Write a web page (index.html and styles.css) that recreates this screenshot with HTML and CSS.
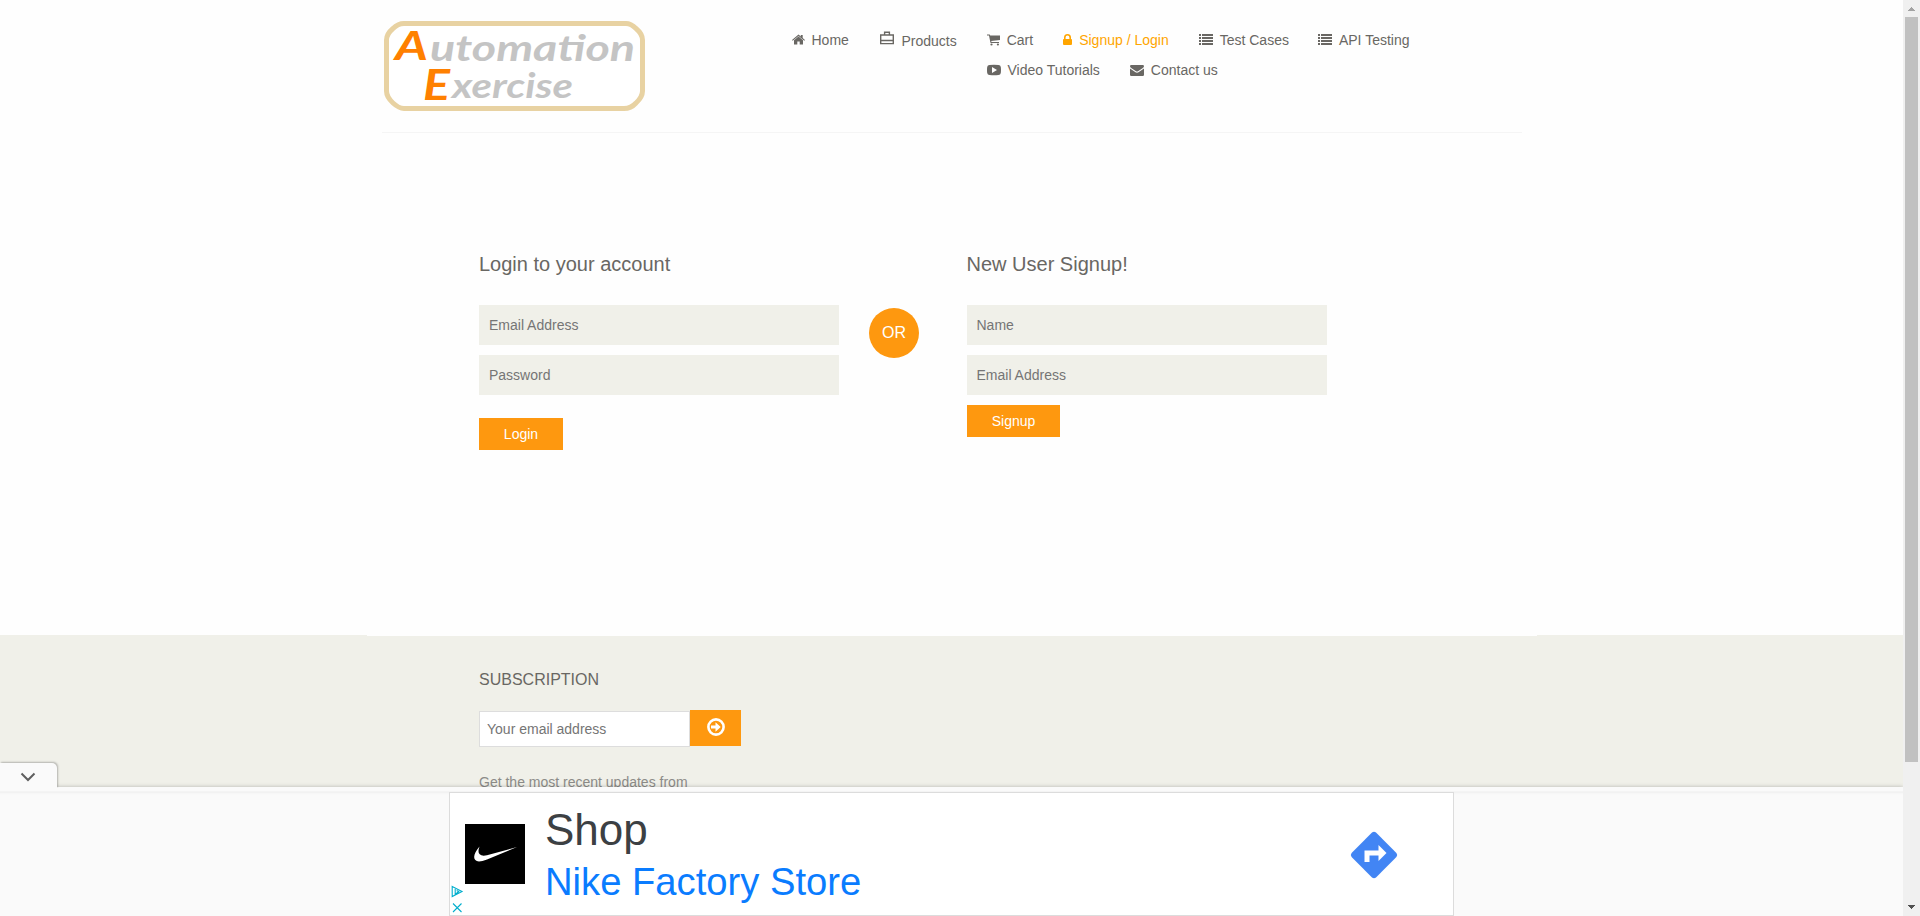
FILE: index.html
```html
<!DOCTYPE html>
<html lang="en">
<head>
<meta charset="utf-8">
<title>Automation Exercise - Signup / Login</title>
<link rel="stylesheet" href="styles.css">
</head>
<body>
<div class="window">
<div class="page">
  <header class="header container">
    <div class="header-inner">
      <a class="logo">
        <svg width="262" height="92" viewBox="0 0 262 92">
          <path class="logo-frame" d="M20 3.500H242Q247 3.500 252 8.500Q258.500 14 258.500 20V71Q258.500 77 252 83Q247 88.500 240 88.500H20Q15 88.500 9 83Q2.500 77 2.500 71V20Q2.500 14 9 8.500Q14 3.500 20 3.500Z"/>
          <g class="logo-text">
            <text class="cap" x="11" y="40" font-size="41" textLength="33" lengthAdjust="spacingAndGlyphs">A</text>
            <text x="46" y="41" font-size="36" textLength="205" lengthAdjust="spacingAndGlyphs">utomation</text>
            <text class="cap" x="39" y="80" font-size="42" textLength="27" lengthAdjust="spacingAndGlyphs">E</text>
            <text x="68" y="78" font-size="35" textLength="121" lengthAdjust="spacingAndGlyphs">xercise</text>
          </g>
        </svg>
      </a>
      <nav class="nav">
        <ul class="nav-row">
          <li><svg width="13" height="14" viewBox="0 0 13 14"><path d="M6.500 3.500 11 7.300V11.500H7.700V8.500H5.300V11.500H2V7.300ZM0 7 6.500 1.500 8.800 3.500V2H10.700V5.100L13 7 12.300 7.800 6.500 3 .7 7.800Z"/></svg>Home</li>
          <li class="products"><svg class="bag" width="15.600" height="16" viewBox="0 0 15.600 16"><path class="line" d="M1.700 5H14.300V13.600H1.700ZM1.700 10.500H14.300M5.600 5V2.200H10.400V5"/></svg><span>Products</span></li>
          <li><svg width="13" height="14" viewBox="0 0 13 14"><path d="M0 1.500H2.700L3.200 2.500H13V7L4.200 8.100 4.500 9H12V10H3.500L2 2.500H0Z"/><circle cx="4.500" cy="11.500" r="1.100"/><circle cx="10.900" cy="11.500" r="1.100"/></svg>Cart</li>
          <li class="active"><svg width="9" height="14" viewBox="0 0 9 14"><path fill-rule="evenodd" d="M1 6V4.500a3.500 3.500 0 0 1 7 0V6q1 0 1 .8V11q0 1-1 1H1q-1 0-1-1V6.800Q0 6 1 6ZM2.600 6H6.400V4.500a1.900 1.900 0 0 0-3.800 0Z"/></svg>Signup / Login</li>
          <li><svg width="14" height="14" viewBox="0 0 14 14"><path d="M0 1H2V3H0ZM3 1H14V3H3ZM0 4H2V6H0ZM3 4H14V6H3ZM0 7H2V9H0ZM3 7H14V9H3ZM0 10H2V12H0ZM3 10H14V12H3Z"/></svg>Test Cases</li>
          <li class="last"><svg width="14" height="14" viewBox="0 0 14 14"><path d="M0 1H2V3H0ZM3 1H14V3H3ZM0 4H2V6H0ZM3 4H14V6H3ZM0 7H2V9H0ZM3 7H14V9H3ZM0 10H2V12H0ZM3 10H14V12H3Z"/></svg>API Testing</li>
        </ul>
        <ul class="nav-row second">
          <li><svg width="14" height="14" viewBox="0 0 14 14"><path fill-rule="evenodd" d="M2.500 2Q7 1.500 11.500 2 13.500 2 13.800 4 14.200 7 13.800 10 13.500 12 11.500 12 7 12.400 2.500 12 .5 12 .2 10-.2 7 .2 4 .5 2 2.500 2ZM5 4V10L10 7Z"/></svg>Video Tutorials</li>
          <li><svg width="14" height="14" viewBox="0 0 14 14"><path d="M1.200 2H12.800Q14 2 14 3.200 14 4.200 12.500 5.200L8 8.300Q7 8.900 6 8.300L1.500 5.200Q0 4.200 0 3.200 0 2 1.200 2ZM0 5.500 5.500 9.300Q7 10.200 8.500 9.300L14 5.500V11.800Q14 13 12.800 13H1.200Q0 13 0 11.800Z"/></svg>Contact us</li>
        </ul>
      </nav>
    </div>
  </header>

  <main class="forms">
    <form class="login">
      <h2>Login to your account</h2>
      <input type="email" placeholder="Email Address">
      <input type="password" placeholder="Password">
      <button type="button">Login</button>
    </form>
    <div class="or">OR</div>
    <form class="signup">
      <h2>New User Signup!</h2>
      <input type="text" placeholder="Name">
      <input type="email" placeholder="Email Address">
      <button type="button">Signup</button>
    </form>
  </main>

  <footer class="footer">
    <div class="footer-edge"></div>
    <div class="subscribe">
      <h2>SUBSCRIPTION</h2>
      <div class="subscribe-row">
        <input type="email" placeholder="Your email address">
        <button type="button" aria-label="Subscribe">
          <svg width="18" height="18" viewBox="0 0 18 18"><circle class="ring" cx="9" cy="9" r="7.600"/><path d="M4 7.600H8.500V4.300L13.700 9 8.500 13.700V10.400H4Z"/></svg>
        </button>
      </div>
      <p>Get the most recent updates from</p>
    </div>
  </footer>

  <aside class="anchor">
    <div class="anchor-tab"><svg width="16" height="10" viewBox="0 0 16 10"><path d="M1.500 1.500 8 8 14.500 1.500"/></svg></div>
    <div class="anchor-bar">
      <div class="ad">
        <div class="ad-logo"><svg width="60" height="60" viewBox="0 0 60 60"><path d="M14.500 22.500C8 30 7 37 14 37.500Q17 37.500 22 35.500L52 23 22 31.300C14 33 12 29 14.500 22.500Z"/></svg></div>
        <div class="ad-copy"><div class="ad-title">Shop</div><div class="ad-link">Nike Factory Store</div></div>
        <svg class="ad-go" width="48" height="48" viewBox="0 0 48 48"><path class="sign" d="M22 1.600Q24 0 26 1.600L46.400 22Q48 24 46.400 26L26 46.400Q24 48 22 46.400L1.600 26Q0 24 1.600 22Z"/><path class="arrow" d="M14.500 31V19.500H28.500V14L36.500 22 28.500 30V24.500H19.500V31Z"/></svg>
        <svg class="ad-marks" width="13" height="28" viewBox="0 0 13 28"><path d="M1.200 1.500 11 6.500 1.200 11.500ZM4.200 4V9.500L7.700 6.500 5.700 5.500M2 18.500 10.500 27M10.500 18.500 2 27"/></svg>
      </div>
    </div>
  </aside>
</div>
<div class="scrollbar">
  <svg width="17" height="17" viewBox="0 0 17 17"><path class="dim" d="M8 7H9V8H10V9H11V10H12V11H5V10H6V9H7V8H8Z"/></svg>
  <div class="thumb"></div>
  <svg width="17" height="17" viewBox="0 0 17 17"><path class="dark" d="M5 6H12V7H11V8H10V9H9V10H8V9H7V8H6V7H5Z"/></svg>
</div>
</div>
</body>
</html>
```

FILE: styles.css
```css
* { box-sizing: border-box; }
body { margin: 0; background: #fefefe; color: #696763; font: 14px/20px "Liberation Sans", Arial, sans-serif; overflow: hidden; }
h2, p, ul { margin: 0; padding: 0; font-weight: 400; }
svg { display: block; flex: none; }
input, button { font: inherit; border: 0; border-radius: 0; outline: 0; }
input::placeholder { color: #757575; opacity: 1; }
button { background: #fe980f; color: #fff; padding: 0; }

.window { display: flex; height: 916px; }
.page { position: relative; width: 1903px; height: 916px; overflow: hidden; }
.container { width: 1170px; margin: 0 auto; padding: 0 15px; }

.header { height: 133px; }
.header-inner { display: flex; height: 133px; border-bottom: 1px solid #f5f5f5; }
.logo { padding: 20px 0 0 2px; width: 410px; }
.logo-frame { fill: #fff; stroke: #e8d2a2; stroke-width: 5; }
.logo-text { fill: #c4c4c4; font-family: Lato, sans-serif; font-style: italic; font-weight: 700; }
.logo-text .cap { fill: #ff8000; }
.nav { padding-top: 30px; }
.nav-row { display: flex; gap: 30px; height: 30px; list-style: none; }
.nav-row li { display: flex; gap: 7px; height: 20px; align-items: center; white-space: nowrap; }
.nav-row svg { fill: currentColor; }
.nav-row .active { color: orange; }
.nav-row .last { margin-left: -1px; }
.nav-row.second { padding-left: 195px; }
.nav-row .products { padding-top: 2px; }
.nav-row .bag { margin-top: -6px; }
.bag .line { fill: none; stroke: currentColor; stroke-width: 1.400; }

.forms { display: flex; height: 502px; padding: 120px 0 0 479px; }
.forms form { display: flex; flex-direction: column; align-items: flex-start; width: 360px; }
.forms h2 { font-size: 20px; line-height: 22px; margin-bottom: 30px; }
.forms .signup h2 { margin-left: -.5px; }
.forms input { width: 360px; height: 40px; margin-bottom: 10px; padding: 0 10px; background: #f0f0e9; }
.forms .signup input { padding-left: 9.500px; }
.login button { width: 84px; height: 32px; margin-top: 13px; }
.signup button { width: 93px; height: 32px; }
.or { width: 50px; height: 50px; margin: 55px 48px 0 30px; border-radius: 50%; background: #fe980f; color: #fff; font-size: 16px; line-height: 49px; text-align: center; }

.footer { height: 281px; background: #f0f0e9; }
.footer-edge { width: 1170px; height: 1px; margin: 0 auto; background: #fefefe; }
.subscribe { padding: 34px 0 0 479px; }
.subscribe h2 { font-size: 16px; line-height: 20px; margin-bottom: 20px; }
.subscribe-row { display: flex; height: 37px; }
.subscribe input { width: 211px; height: 36px; margin-top: 1px; padding: 0 7px; background: #fff; border: 1px solid #ddd; }
.subscribe button { width: 51px; height: 36px; display: flex; justify-content: center; padding-top: 8px; }
.subscribe button svg { fill: #fff; }
.subscribe .ring { fill: none; stroke: #fff; stroke-width: 2.600; }
.subscribe p { margin-top: 25px; color: #8c8b88; }

.anchor { position: absolute; left: 0; right: 0; bottom: 0; height: 153px; }
.anchor-tab { position: relative; z-index: 1; width: 57px; height: 25px; padding: 9px 0 0 20px; background: #fafafa; border-radius: 0 5px 0 0; box-shadow: 1px -1px 2px rgba(0, 0, 0, .25); clip-path: inset(-4px -5px 0 0); }
.anchor-tab path { fill: none; stroke: #5f5f5f; stroke-width: 2; }
.anchor-bar { height: 129px; margin-top: -1px; padding-top: 5px; background: linear-gradient(#fafafa 4px, #eee 5px, #f6f6f6 6px, #fafafa 8px); box-shadow: 0 0 4px rgba(0, 0, 0, .25); }
.ad { position: relative; display: flex; width: 1005px; height: 124px; margin-left: 449px; border: 1px solid #dcdcdc; background: #fff; }
.ad-logo { width: 60px; height: 60px; margin: 31px 20px 0 15px; background: #000; }
.ad-logo path { fill: #fff; }
.ad-copy { width: 804.500px; padding-top: 11px; }
.ad-title { font-size: 44px; line-height: 52px; color: #3c4043; }
.ad-link { font-size: 38.200px; line-height: 52px; color: #0a7cff; }
.ad-go { margin-top: 37.500px; }
.ad-go .sign { fill: #4285f4; }
.ad-go .arrow { fill: #fff; }
.ad-marks { position: absolute; left: 1px; bottom: 2px; fill: none; stroke: #00aecd; stroke-width: 1.100; }

.scrollbar { display: flex; flex-direction: column; width: 17px; background: #f0f0f0; }
.thumb { width: 13px; height: 745px; margin: 0 2px 137px; background: #c1c1c1; }
.dim { fill: #a3a3a3; }
.dark { fill: #505050; }
```
